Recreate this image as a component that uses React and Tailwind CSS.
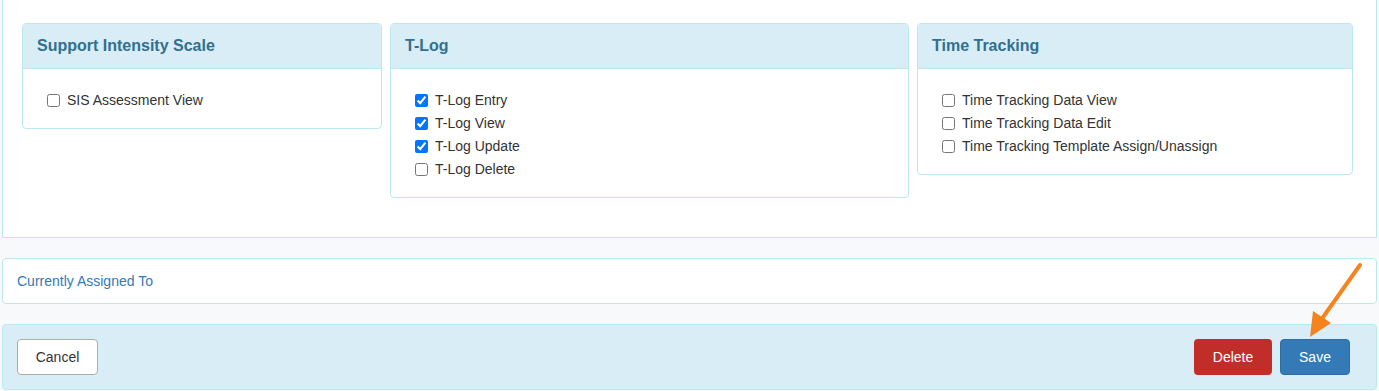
import { useState } from "react";

const FONT = { fontFamily: '"Liberation Sans", Arial, sans-serif' };

const groups = [
  {
    title: "Support Intensity Scale",
    width: "w-[360px]",
    items: [{ label: "SIS Assessment View", checked: false }],
  },
  {
    title: "T-Log",
    width: "w-[519px]",
    items: [
      { label: "T-Log Entry", checked: true },
      { label: "T-Log View", checked: true },
      { label: "T-Log Update", checked: true },
      { label: "T-Log Delete", checked: false },
    ],
  },
  {
    title: "Time Tracking",
    width: "w-[436px]",
    items: [
      { label: "Time Tracking Data View", checked: false },
      { label: "Time Tracking Data Edit", checked: false },
      { label: "Time Tracking Template Assign/Unassign", checked: false },
    ],
  },
];

function Group({ group }) {
  const [state, setState] = useState(group.items.map((i) => i.checked));

  return (
    <div className={`${group.width} shrink-0 border border-[#bce8f1] rounded-[4px] bg-white overflow-hidden`}>
      <div className="h-[45px] bg-[#d9edf7] border-b border-[#bce8f1] px-[14px] flex items-center">
        <h3 className="text-[16px] font-bold text-[#31708f]">{group.title}</h3>
      </div>
      <div className="pt-[20px] pb-[16px] px-[24px]">
        {group.items.map((item, i) => (
          <label key={item.label} className="flex items-center h-[23px] text-[14px] text-[#333]">
            <input
              type="checkbox"
              checked={state[i]}
              onChange={() => setState((s) => s.map((v, j) => (j === i ? !v : v)))}
              className="w-[13px] h-[13px] m-0 mr-[7px] accent-[#0075ff]"
            />
            {item.label}
          </label>
        ))}
      </div>
    </div>
  );
}

export default function App() {
  return (
    <div className="relative min-h-[391px] bg-[#f7f9fa] px-[2px] text-[14px]" style={FONT}>
      {/* Permissions panel */}
      <div className="bg-white border border-t-0 border-[#bce8f1] h-[238px] pt-[23px] pl-[19px] pr-[20px]">
        <div className="flex items-start gap-[8px]">
          {groups.map((g) => (
            <Group key={g.title} group={g} />
          ))}
        </div>
      </div>

      {/* Assigned */}
      <div className="mt-[20px] bg-white border border-[#bce8f1] rounded-[4px] h-[46px] px-[14px] flex items-center">
        <span className="text-[14px] text-[#337ab7]">Currently Assigned To</span>
      </div>

      {/* Footer */}
      <div className="mt-[20px] bg-[#d9edf7] border border-[#bce8f1] rounded-[4px] h-[66px] px-[14px] flex items-center justify-between">
        <button className="w-[81px] h-[36px] bg-white border border-[#adadad] rounded-[4px] text-[14px] text-[#333]">
          Cancel
        </button>
        <div className="flex gap-[8px] mr-[12px]">
          <button className="w-[78px] h-[36px] bg-[#c12e2a] rounded-[4px] text-[14px] text-white">
            Delete
          </button>
          <button className="w-[70px] h-[36px] bg-[#337ab7] border border-[#2e6da4] rounded-[4px] text-[14px] text-white">
            Save
          </button>
        </div>
      </div>

      {/* Annotation arrow */}
      <svg className="absolute left-[1300px] top-[258px] pointer-events-none" width="70" height="85" viewBox="0 0 70 85">
        <line x1="60" y1="7" x2="21" y2="62" stroke="#f5841f" strokeWidth="4" strokeLinecap="round" />
        <polygon points="10,79 13,53 31,65" fill="#f5841f" />
      </svg>
    </div>
  );
}
